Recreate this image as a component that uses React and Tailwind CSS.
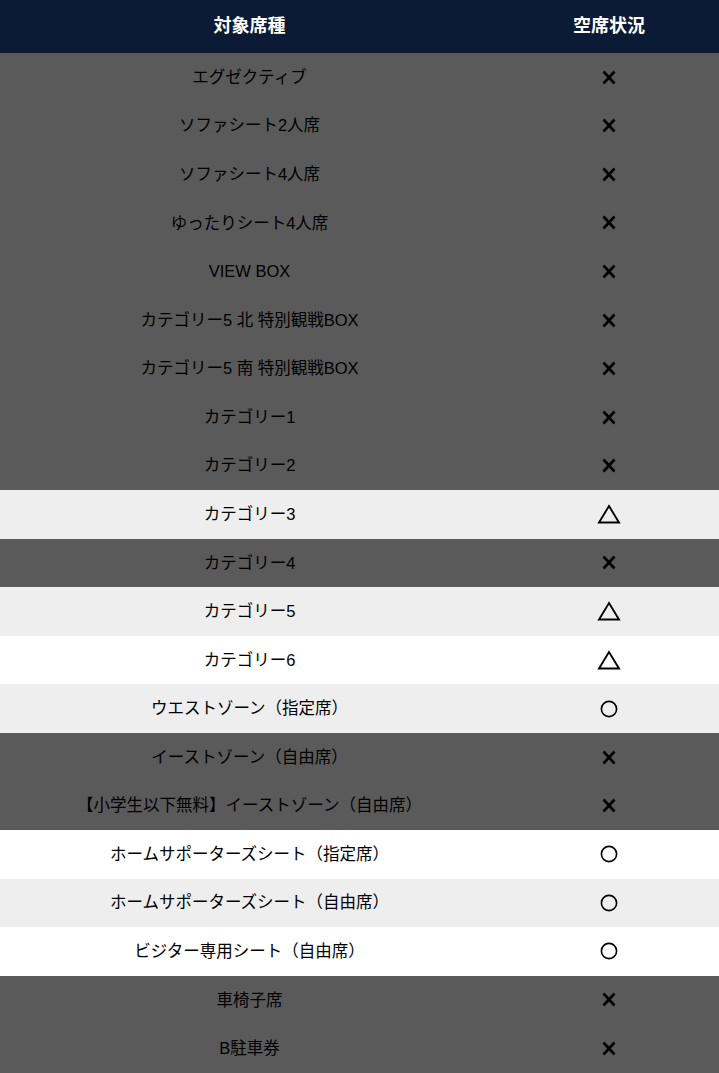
const rows = [
  ["エグゼクティブ", "x", "dark"],
  ["ソファシート2人席", "x", "dark"],
  ["ソファシート4人席", "x", "dark"],
  ["ゆったりシート4人席", "x", "dark"],
  ["VIEW BOX", "x", "dark"],
  ["カテゴリー5 北 特別観戦BOX", "x", "dark"],
  ["カテゴリー5 南 特別観戦BOX", "x", "dark"],
  ["カテゴリー1", "x", "dark"],
  ["カテゴリー2", "x", "dark"],
  ["カテゴリー3", "tri", "light"],
  ["カテゴリー4", "x", "dark"],
  ["カテゴリー5", "tri", "light"],
  ["カテゴリー6", "tri", "white"],
  ["ウエストゾーン（指定席）", "o", "light"],
  ["イーストゾーン（自由席）", "x", "dark"],
  ["【小学生以下無料】イーストゾーン（自由席）", "x", "dark"],
  ["ホームサポーターズシート（指定席）", "o", "white"],
  ["ホームサポーターズシート（自由席）", "o", "light"],
  ["ビジター専用シート（自由席）", "o", "white"],
  ["車椅子席", "x", "dark"],
  ["B駐車券", "x", "dark"],
];

const bg = {
  dark: "bg-[#5a5a5a]",
  light: "bg-[#eeeeee]",
  white: "bg-white",
};

function Mark({ type }) {
  if (type === "x") {
    return (
      <svg width="14" height="15" viewBox="0 0 14 15">
        <path d="M1.5 1.5 L12.5 13.5 M12.5 1.5 L1.5 13.5" stroke="#000" strokeWidth="2.6" strokeLinecap="butt" />
      </svg>
    );
  }
  if (type === "tri") {
    return (
      <svg width="24" height="20" viewBox="0 0 24 20">
        <path d="M12 2 L22 18.5 L2 18.5 Z" fill="none" stroke="#000" strokeWidth="1.9" strokeLinejoin="miter" />
      </svg>
    );
  }
  return (
    <svg width="18" height="18" viewBox="0 0 18 18">
      <circle cx="9" cy="9" r="7.6" fill="none" stroke="#000" strokeWidth="1.6" />
    </svg>
  );
}

export default function App() {
  return (
    <div className="w-[719px] bg-white font-['Liberation_Sans','Noto_Sans_CJK_JP',sans-serif]">
      <div className="flex h-[53px] items-center bg-[#0b1b35] text-[18px] font-bold text-white">
        <div className="w-[499px] text-center">対象席種</div>
        <div className="flex-1 text-center">空席状況</div>
      </div>
      {rows.map(([name, mark, tone]) => (
        <div key={name} className={`flex h-[48.57px] items-center text-[16.5px] text-black ${bg[tone]}`}>
          <div className="w-[499px] text-center">{name}</div>
          <div className="flex flex-1 justify-center">
            <Mark type={mark} />
          </div>
        </div>
      ))}
    </div>
  );
}
